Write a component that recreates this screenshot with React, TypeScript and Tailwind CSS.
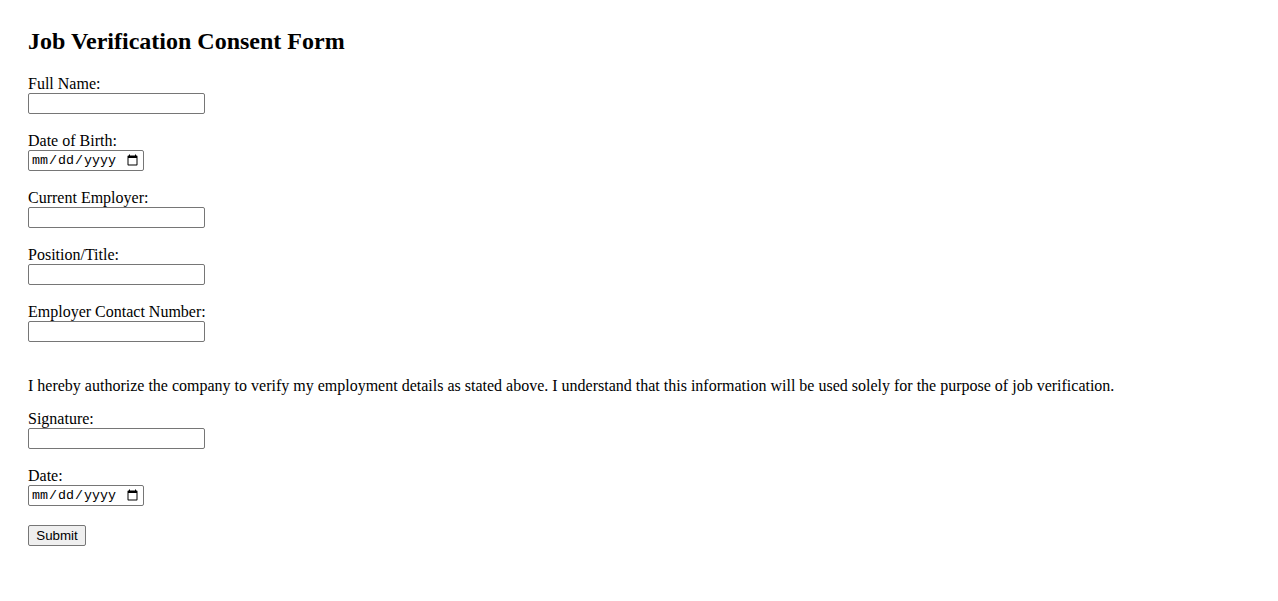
export default function App() {
  const fields = [
    { label: "Full Name:", type: "text" },
    { label: "Date of Birth:", type: "date" },
    { label: "Current Employer:", type: "text" },
    { label: "Position/Title:", type: "text" },
    { label: "Employer Contact Number:", type: "text" },
  ];

  const inputCls =
    "block h-[21px] border border-[#767676] rounded-[2px] bg-white px-[2px] py-[1px] text-[13.33px] text-black";
  const textFont = "w-[177px] [font-family:'Liberation_Sans',Arial,sans-serif]";
  const dateFont = "w-[116px] [font-family:'Liberation_Mono','Courier_New',monospace]";

  return (
    <main className="min-h-screen bg-white px-[28px] pt-[27px] text-black text-[16px] [font-family:'Liberation_Serif','Times_New_Roman',serif]">
      <h2 className="text-[24px] font-bold leading-[28px] mb-[20px]">
        Job Verification Consent Form
      </h2>

      <form onSubmit={(e) => e.preventDefault()}>
        {fields.map((f) => (
          <div key={f.label} className="mb-[18px]">
            <label className="block leading-[18px]">{f.label}</label>
            <input
              type={f.type}
              className={`${inputCls} ${f.type === "date" ? dateFont : textFont}`}
            />
          </div>
        ))}

        <p className="leading-[18px] mt-[35px] mb-[15px]">
          I hereby authorize the company to verify my employment details as stated above. I understand that this information will be used solely for the purpose of job verification.
        </p>

        <div className="mb-[18px]">
          <label className="block leading-[18px]">Signature:</label>
          <input type="text" className={`${inputCls} ${textFont}`} />
        </div>

        <div className="mb-[17px]">
          <label className="block leading-[18px]">Date:</label>
          <input type="date" className={`${inputCls} ${dateFont}`} />
        </div>

        <button
          type="submit"
          className="h-[21px] w-[58px] border border-[#767676] rounded-[2px] bg-[#efefef] text-[13.33px] leading-none [font-family:'Liberation_Sans',Arial,sans-serif]"
        >
          Submit
        </button>
      </form>
    </main>
  );
}
